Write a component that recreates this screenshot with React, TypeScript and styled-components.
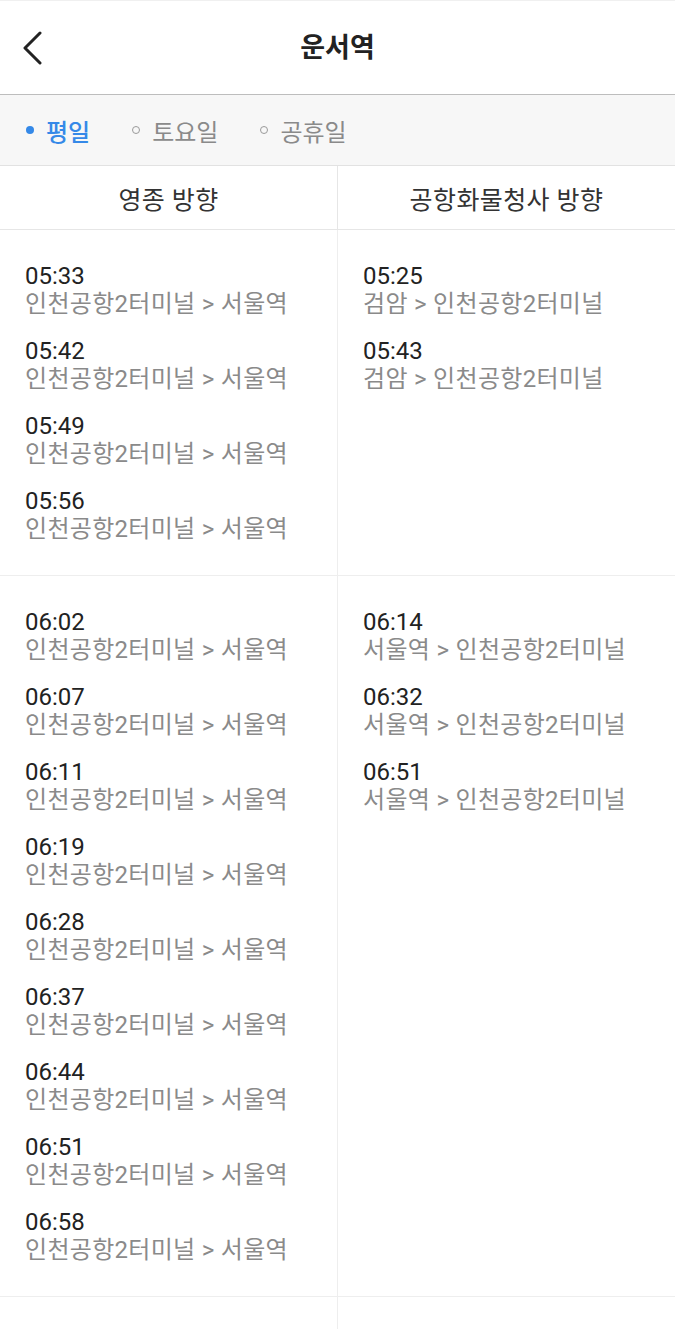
import React from "react";
import styled, { createGlobalStyle } from "styled-components";

interface ITrain {
  time: string;
  route: string;
}

interface IHourGroup {
  left: ITrain[];
  right: ITrain[];
}

type TDayValue = "WEEKDAY" | "SATURDAY" | "HOLIDAY";

const dayTabs: { value: TDayValue; label: string }[] = [
  { value: "WEEKDAY", label: "평일" },
  { value: "SATURDAY", label: "토요일" },
  { value: "HOLIDAY", label: "공휴일" },
];

const toSeoul = "인천공항2터미널 > 서울역";
const toAirport = "서울역 > 인천공항2터미널";

const groups: IHourGroup[] = [
  {
    left: ["05:33", "05:42", "05:49", "05:56"].map((time) => ({ time, route: toSeoul })),
    right: [
      { time: "05:25", route: "검암 > 인천공항2터미널" },
      { time: "05:43", route: "검암 > 인천공항2터미널" },
    ],
  },
  {
    left: ["06:02", "06:07", "06:11", "06:19", "06:28", "06:37", "06:44", "06:51", "06:58"].map(
      (time) => ({ time, route: toSeoul })
    ),
    right: ["06:14", "06:32", "06:51"].map((time) => ({ time, route: toAirport })),
  },
  // next hour starts right at the bottom edge of the screen
  { left: [], right: [] },
];

const GlobalStyle = createGlobalStyle`
  html, body {
    margin: 0;
    padding: 0;
    background: #ffffff;
  }
  body {
    font-family: Roboto, "Noto Sans CJK KR", "Noto Sans", sans-serif;
    -webkit-font-smoothing: antialiased;
  }
`;

export default function App() {
  const [day, setDay] = React.useState<TDayValue>("WEEKDAY");

  return (
    <S.Page>
      <GlobalStyle />
      <S.Header>
        <S.BackButton aria-label="뒤로">
          <svg width="22" height="34" viewBox="0 0 22 34" fill="none">
            <path
              d="M19 2 L4 17 L19 32"
              stroke="#222"
              strokeWidth="3"
              strokeLinecap="round"
              strokeLinejoin="round"
            />
          </svg>
        </S.BackButton>
        <S.Title>운서역</S.Title>
      </S.Header>

      <S.Tabs>
        {dayTabs.map((tab) => (
          <S.Tab key={tab.value} $active={day === tab.value} onClick={() => setDay(tab.value)}>
            <S.Dot $active={day === tab.value} />
            {tab.label}
          </S.Tab>
        ))}
      </S.Tabs>

      <S.ColumnHeader>
        <S.ColumnTitle>영종 방향</S.ColumnTitle>
        <S.ColumnTitle>공항화물청사 방향</S.ColumnTitle>
      </S.ColumnHeader>

      {groups.map((group, i) => (
        <S.HourRow key={i}>
          <S.Column>
            {group.left.map((train) => (
              <TrainItem key={train.time} train={train} />
            ))}
          </S.Column>
          <S.Column>
            {group.right.map((train) => (
              <TrainItem key={train.time} train={train} />
            ))}
          </S.Column>
        </S.HourRow>
      ))}
    </S.Page>
  );
}

function TrainItem({ train }: { train: ITrain }) {
  return (
    <S.Train>
      <S.Time>{train.time}</S.Time>
      <S.Route>{train.route}</S.Route>
    </S.Train>
  );
}

const S = {
  Page: styled.div`
    width: 675px;
    height: 1329px;
    overflow: hidden;
    background: #ffffff;
    border-top: 1px solid #f0f0f0;
    box-sizing: border-box;
  `,
  Header: styled.header`
    position: relative;
    height: 93px;
    display: flex;
    align-items: center;
    justify-content: center;
    border-bottom: 1px solid #bdbdbd;
  `,
  BackButton: styled.button`
    position: absolute;
    left: 21px;
    top: 30px;
    padding: 0;
    border: 0;
    background: none;
    display: flex;
  `,
  Title: styled.h1`
    margin: 0 0 4px;
    font-size: 27px;
    font-weight: 700;
    color: #222;
  `,
  Tabs: styled.nav`
    height: 70px;
    display: flex;
    align-items: center;
    gap: 42px;
    padding-left: 26px;
    background: #f7f7f7;
    border-bottom: 1px solid #e2e2e2;
  `,
  Tab: styled.div<{ $active: boolean }>`
    display: flex;
    align-items: center;
    gap: 12px;
    font-size: 24px;
    font-weight: ${(p) => (p.$active ? 500 : 400)};
    color: ${(p) => (p.$active ? "#3589e8" : "#8a8a8a")};
    cursor: pointer;
  `,
  Dot: styled.span<{ $active: boolean }>`
    width: 8px;
    height: 8px;
    border-radius: 50%;
    box-sizing: border-box;
    background: ${(p) => (p.$active ? "#3589e8" : "transparent")};
    border: ${(p) => (p.$active ? "none" : "1.5px solid #9a9a9a")};
  `,
  ColumnHeader: styled.div`
    display: grid;
    grid-template-columns: 337px 1fr;
    height: 63px;
    border-bottom: 1px solid #e6e6e6;
  `,
  ColumnTitle: styled.div`
    display: flex;
    align-items: center;
    justify-content: center;
    font-size: 25px;
    letter-spacing: 0.4px;
    color: #333;
    & + & {
      border-left: 1px solid #e6e6e6;
    }
  `,
  HourRow: styled.div`
    display: grid;
    grid-template-columns: 337px 1fr;
    min-height: 64px;
    border-bottom: 1px solid #eeeeee;
  `,
  Column: styled.div`
    display: flex;
    flex-direction: column;
    gap: 19px;
    padding: 32px 0 32px 25px;
    & + & {
      border-left: 1px solid #eeeeee;
    }
  `,
  Train: styled.div`
    display: flex;
    flex-direction: column;
  `,
  Time: styled.div`
    font-size: 24px;
    line-height: 28px;
    color: #222;
  `,
  Route: styled.div`
    font-size: 24px;
    line-height: 28px;
    letter-spacing: 0.3px;
    color: #8a8a8a;
    white-space: nowrap;
  `,
};
